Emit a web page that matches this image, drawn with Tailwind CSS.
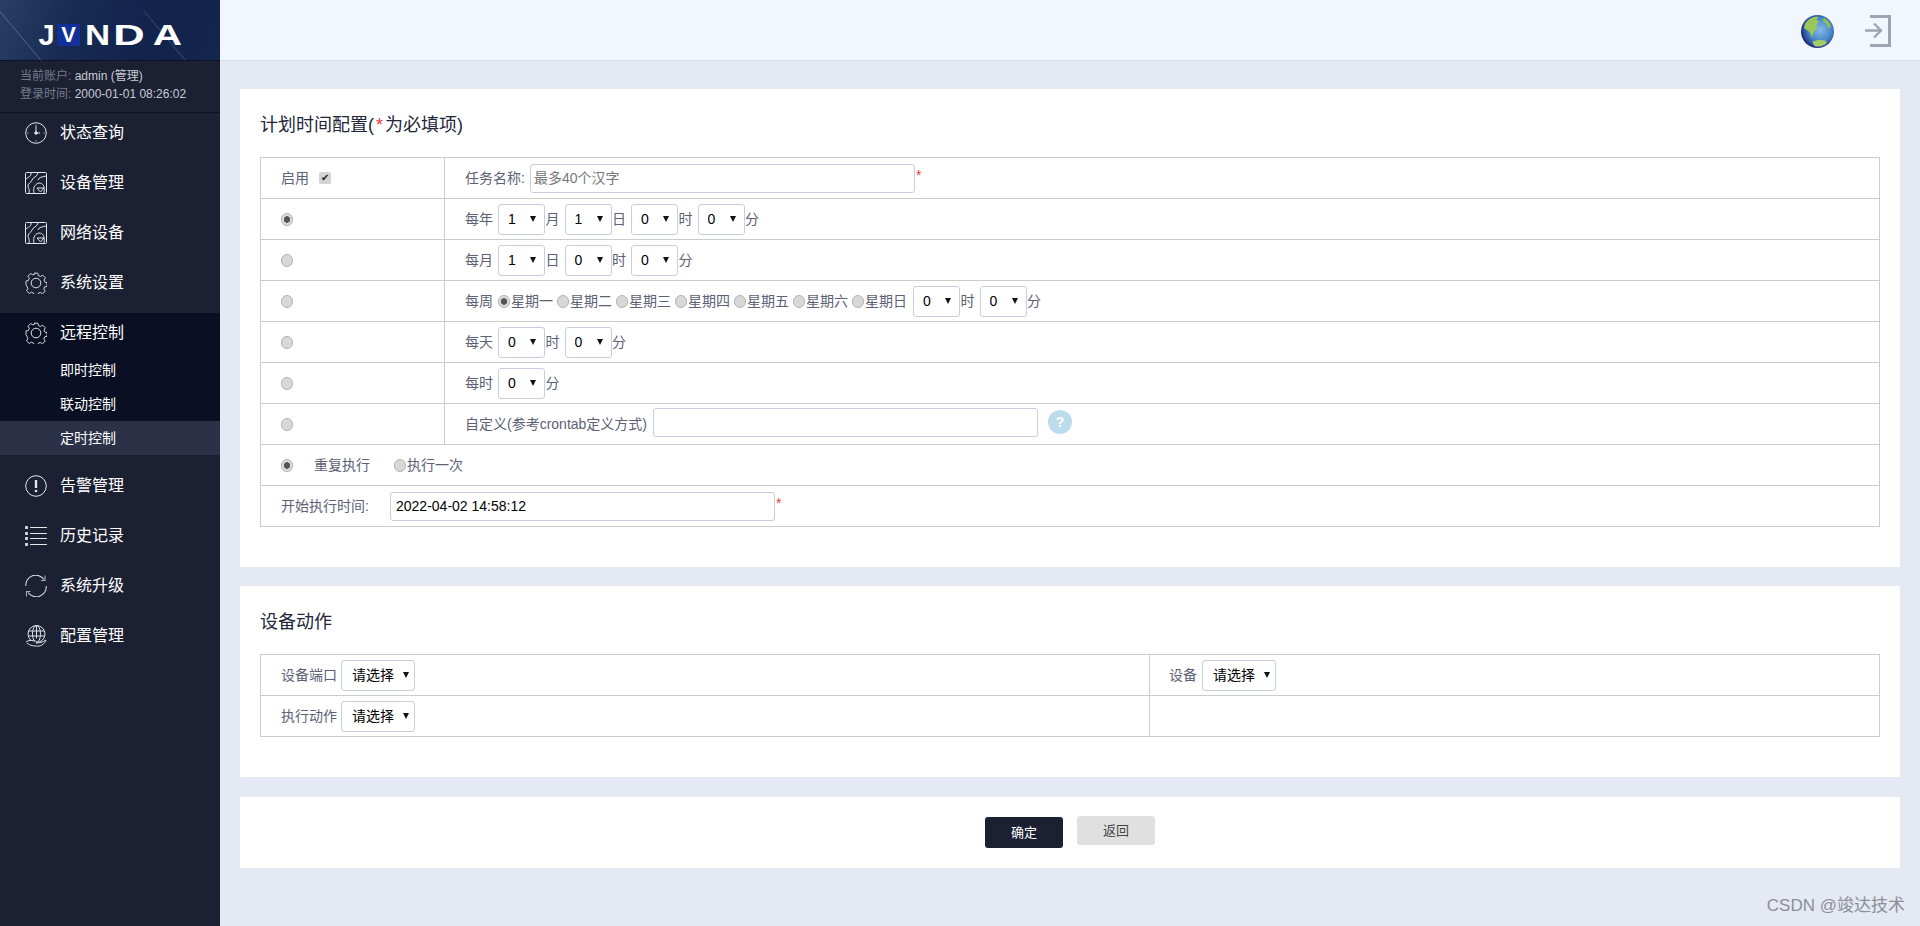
<!DOCTYPE html>
<html lang="zh-CN">
<head>
<meta charset="UTF-8">
<title>计划时间配置</title>
<script src="https://cdn.jsdelivr.net/npm/@tailwindcss/browser@4"></script>
</head>
<body class="bg-[#e4e9f4] font-['Liberation_Sans','Noto_Sans_CJK_SC',sans-serif] text-[14px] text-[#5c6175]">
<div class="relative flex h-[926px] w-[1920px] overflow-hidden">

  <!-- sidebar -->
  <aside class="w-[220px] shrink-0 bg-[#1b2033] text-white">
    <div class="relative flex h-[60px] items-center justify-center overflow-hidden bg-[linear-gradient(110deg,#2a3f63_0%,#162a52_35%,#12234c_70%,#15264e_100%)]">
      <div class="absolute left-[15px] top-[-40px] h-[140px] w-px rotate-[-40deg] bg-white/20"></div>
      <div class="absolute left-[172px] top-[0px] h-[90px] w-px rotate-[-40deg] bg-white/15"></div>
      <div class="relative mt-[10px] flex items-center text-[29px] font-bold leading-[22px] text-white">
        <span class="flex w-[17px] justify-center">J</span>
        <span class="ml-[2px] mr-[5px] flex h-[22px] w-[23px] items-center justify-center bg-[#12309a] text-[22px]">V</span>
        <span class="mr-[3px] flex w-[25px] scale-x-[1.2] justify-center">N</span>
        <span class="mr-[8px] flex w-[32px] scale-x-[1.5] justify-center">D</span>
        <span class="flex w-[29px] scale-x-[1.4] justify-center">A</span>
      </div>
    </div>
    <div class="h-[53px] border-y border-[#0e1224] pl-[20px] pt-[6px] text-[12px] leading-[18px] text-[#c9ccd6]">
      <div><span class="text-[#777c8e]">当前账户:</span> admin (管理)</div>
      <div><span class="text-[#777c8e]">登录时间:</span> 2000-01-01 08:26:02</div>
    </div>

    <nav class="-mt-[5px] text-[16px]">
      <a class="flex h-[50px] items-center gap-[13px] pl-[25px]">
        <svg class="h-[22px] w-[22px]" viewBox="0 0 22 22" fill="none" stroke="#dfe1e8" stroke-width="1"><circle cx="11" cy="11" r="10.3"/><path d="M11 4v7h4M11 2.5v1M11 18.5v1M2.5 11h1M18.500 11h1"/><circle cx="11" cy="11" r="1.300" fill="#dfe1e8"/></svg>
        <span>状态查询</span>
      </a>
      <a class="flex h-[50px] items-center gap-[13px] pl-[25px]">
        <svg class="h-[22px] w-[22px]" viewBox="0 0 22 22" fill="none" stroke="#e4e6ec" stroke-width="1"><rect x="0.500" y="0.500" width="21" height="21" rx="1"/><path d="M6 1C7 4 3 5 1 7M13 1C12 5 8 5 7 8 6 11 3 11 3 14 3 16 5 17 4 21M21 4C17 5 14 5 13 8M9 21C8 17 9 12 14 11 18 11 20 14 19 21"/><path d="M12 16h7l-3.500 4z"/></svg>
        <span>设备管理</span>
      </a>
      <a class="flex h-[50px] items-center gap-[13px] pl-[25px]">
        <svg class="h-[22px] w-[22px]" viewBox="0 0 22 22" fill="none" stroke="#e4e6ec" stroke-width="1"><rect x="0.500" y="0.500" width="21" height="21" rx="1"/><path d="M6 1C7 4 3 5 1 7M13 1C12 5 8 5 7 8 6 11 3 11 3 14 3 16 5 17 4 21M21 4C17 5 14 5 13 8M9 21C8 17 9 12 14 11 18 11 20 14 19 21"/><path d="M12 16h7l-3.500 4z"/></svg>
        <span>网络设备</span>
      </a>
      <a class="flex h-[50px] items-center gap-[13px] pl-[25px]">
        <svg class="h-[22px] w-[22px]" viewBox="0 0 22 22" fill="none" stroke="#dfe1e8" stroke-width="1"><circle cx="11" cy="11" r="4.800"/><path d="M9 .7h4l.6 2.600 2.200.9 2.300-1.400 2.800 2.800-1.400 2.300.9 2.200 2.300.6v3.800l-2.600.7-.8 2.100 1.400 2.300-2.800 2.800-2.300-1.400-2.200.9-.6 2.300H9l-.6-2.600-2.200-.9-2.300 1.400-2.800-2.800 1.400-2.300-.9-2.200L.5 12.800V9l2.600-.7.9-2.100-1.400-2.300 2.800-2.800 2.300 1.400 2.200-.9z" transform="translate(.5 .5) scale(.95)"/></svg>
        <span>系统设置</span>
      </a>

      <div class="mb-[6px] mt-[5px] bg-[#0a0f24]">
        <a class="flex h-[40px] items-center gap-[13px] pl-[25px]">
          <svg class="h-[22px] w-[22px]" viewBox="0 0 22 22" fill="none" stroke="#dfe1e8" stroke-width="1"><circle cx="11" cy="11" r="4.800"/><path d="M9 .7h4l.6 2.600 2.200.9 2.300-1.400 2.800 2.800-1.400 2.300.9 2.200 2.300.6v3.800l-2.600.7-.8 2.100 1.400 2.300-2.800 2.800-2.300-1.400-2.200.9-.6 2.300H9l-.6-2.600-2.200-.9-2.300 1.400-2.800-2.800 1.400-2.300-.9-2.200L.5 12.800V9l2.600-.7.9-2.100-1.400-2.300 2.800-2.800 2.300 1.400 2.200-.9z" transform="translate(.5 .5) scale(.95)"/></svg>
          <span>远程控制</span>
        </a>
        <a class="flex h-[34px] items-center pl-[60px] text-[14px]">即时控制</a>
        <a class="flex h-[34px] items-center pl-[60px] text-[14px]">联动控制</a>
        <a class="flex h-[34px] items-center bg-[#2c3148] pl-[60px] text-[14px]">定时控制</a>
      </div>

      <a class="flex h-[50px] items-center gap-[13px] pl-[25px]">
        <svg class="h-[22px] w-[22px]" viewBox="0 0 22 22" fill="none" stroke="#e4e6ec" stroke-width="1"><circle cx="11" cy="11" r="10.300"/><path d="M11 5v8" stroke-width="2.400"/><circle cx="11" cy="16" r="1.300" fill="#e4e6ec" stroke="none"/></svg>
        <span>告警管理</span>
      </a>
      <a class="flex h-[50px] items-center gap-[13px] pl-[25px]">
        <svg class="h-[22px] w-[22px]" viewBox="0 0 22 22" fill="none" stroke="#e4e6ec" stroke-width="1"><path d="M5 2.500h17M5 8.500h17M5 13.500h17M5 19.500h17"/><path d="M1.500 1v3M1.500 7v3M1.500 12v3M1.500 18v3" stroke-width="2.600"/></svg>
        <span>历史记录</span>
      </a>
      <a class="flex h-[50px] items-center gap-[13px] pl-[25px]">
        <svg class="h-[22px] w-[22px]" viewBox="0 0 22 22" fill="none" stroke="#d5d7df" stroke-width="1.100"><path d="M.8 11A10 10 0 0 1 19 4.500M21.200 11A10 10 0 0 1 3 17.500"/><path d="M20 .5v5h-4M1.500 21.500v-5h4" stroke="#a9acb8"/></svg>
        <span>系统升级</span>
      </a>
      <a class="flex h-[50px] items-center gap-[13px] pl-[25px]">
        <svg class="h-[22px] w-[22px]" viewBox="0 0 22 22" fill="none" stroke="#dfe1e8" stroke-width="1"><circle cx="11.500" cy="9" r="8.500"/><ellipse cx="11.500" cy="9" rx="4" ry="8.500"/><path d="M11.500 .5v13M3.500 6h16M3.500 11h16"/><path d="M1 17c3-2 5-2 8-1 3 0 4 1 2 2M11 18c4 0 7-1 10-3-1 4-6 7-10 6-4 0-7-1-9-3" fill="#1b2033"/></svg>
        <span>配置管理</span>
      </a>
    </nav>
  </aside>

  <!-- main -->
  <div class="flex min-w-0 flex-1 flex-col">
    <header class="flex h-[61px] shrink-0 items-center justify-end border-b border-[#d8dde8] bg-[#f2f6fe] pr-[29px]">
      <svg class="mr-[31px] mt-[3px] h-[33px] w-[33px]" viewBox="0 0 32 32">
        <defs>
          <radialGradient id="sea" cx="58%" cy="45%" r="58%"><stop offset="0" stop-color="#86bbe8"/><stop offset="0.600" stop-color="#4787c6"/><stop offset="0.880" stop-color="#2a4a9a"/><stop offset="1" stop-color="#1c2470"/></radialGradient>
        </defs>
        <circle cx="16" cy="16" r="16" fill="url(#sea)"/>
        <path d="M8 4c3-2 6-3 9-2l-2 3 3 1-3 3 1 3-4 5-1 5-3-6-5-3C3 9 5 6 8 4z" fill="#9ac65c"/>
        <path d="M22 3c3 1 6 4 7 8l-2 2-3-5-3-2z" fill="#8fbf55"/>
        <path d="M11 26c4-2 9-2 13-1l1 2c-4 4-8 4-12 3z" fill="#a3cc64"/>
      </svg>
      <svg class="mt-[2px] h-[32px] w-[26px]" viewBox="0 0 26 32" fill="none" stroke="#9ea4b4">
        <path d="M5 1.500h19.500v29H5" stroke-width="3"/>
        <path d="M0 15.500h15M9 8.500l7 7-7 7" stroke-width="2.400"/>
      </svg>
    </header>

    <main class="px-5 pt-[28px]">
      <section class="mb-[19px] h-[478px] bg-white px-5 pt-5">
        <h2 class="mb-4 flex h-8 items-center text-[18px] font-normal text-[#22263a]">计划时间配置(<span class="mx-[2px] text-[#e53935]">*</span>为必填项)</h2>
        <table class="w-full table-fixed border-collapse border border-[#cccccc]">
          <colgroup><col class="w-[184px]"><col></colgroup>
          <tr class="h-[41px] border-b border-[#cccccc]">
            <td class="border-r border-[#cccccc] pl-[20px]">
              <div class="flex items-center">
                <span>启用</span>
                <span class="ml-[10px] flex h-[12px] w-[12px] items-center justify-center rounded-[2px] bg-[#d4d4d4] text-[10px] leading-none text-[#222]">✔</span>
              </div>
            </td>
            <td class="pl-[20px]">
              <div class="flex items-center">
                <span class="mr-[5px]">任务名称:</span>
                <input class="h-[29px] w-[385px] rounded-[3px] border border-[#c5cfe0] px-[3px] text-[14px] placeholder:text-[#777]" placeholder="最多40个汉字">
                <span class="mb-[6px] ml-px text-[#e53935]">*</span>
              </div>
            </td>
          </tr>
          <tr class="h-[41px] border-b border-[#cccccc]">
            <td class="border-r border-[#cccccc] pl-[20px]"><input type="radio" name="plan" checked class="block h-[13px] w-[12px] appearance-none rounded-full border border-[#b4b4b4] bg-[#d8d8d8] checked:bg-[radial-gradient(circle,#555_0_3px,#dcdcdc_3.5px)]"></td>
            <td class="pl-[20px]">
              <div class="flex items-center">
                <span class="mr-[5px]">每年</span>
                <div class="relative mr-[0.5px]"><select class="h-[31px] w-[47px] appearance-none rounded-[3px] border border-[#c5cfe0] pl-[9px] text-[14px] text-black"><option>1</option></select><svg class="absolute right-[9px] top-[12px] h-[6px] w-[6px]" viewBox="0 0 6 6"><path d="M0 0h6L3 6z" fill="#111"/></svg></div>
                <span class="mr-[5px]">月</span>
                <div class="relative mr-[0.5px]"><select class="h-[31px] w-[47px] appearance-none rounded-[3px] border border-[#c5cfe0] pl-[9px] text-[14px] text-black"><option>1</option></select><svg class="absolute right-[9px] top-[12px] h-[6px] w-[6px]" viewBox="0 0 6 6"><path d="M0 0h6L3 6z" fill="#111"/></svg></div>
                <span class="mr-[5px]">日</span>
                <div class="relative mr-[0.5px]"><select class="h-[31px] w-[47px] appearance-none rounded-[3px] border border-[#c5cfe0] pl-[9px] text-[14px] text-black"><option>0</option></select><svg class="absolute right-[9px] top-[12px] h-[6px] w-[6px]" viewBox="0 0 6 6"><path d="M0 0h6L3 6z" fill="#111"/></svg></div>
                <span class="mr-[5px]">时</span>
                <div class="relative mr-[0.5px]"><select class="h-[31px] w-[47px] appearance-none rounded-[3px] border border-[#c5cfe0] pl-[9px] text-[14px] text-black"><option>0</option></select><svg class="absolute right-[9px] top-[12px] h-[6px] w-[6px]" viewBox="0 0 6 6"><path d="M0 0h6L3 6z" fill="#111"/></svg></div>
                <span>分</span>
              </div>
            </td>
          </tr>
          <tr class="h-[41px] border-b border-[#cccccc]">
            <td class="border-r border-[#cccccc] pl-[20px]"><input type="radio" name="plan" class="block h-[13px] w-[12px] appearance-none rounded-full border border-[#b4b4b4] bg-[#d8d8d8] checked:bg-[radial-gradient(circle,#555_0_3px,#dcdcdc_3.5px)]"></td>
            <td class="pl-[20px]">
              <div class="flex items-center">
                <span class="mr-[5px]">每月</span>
                <div class="relative mr-[0.5px]"><select class="h-[31px] w-[47px] appearance-none rounded-[3px] border border-[#c5cfe0] pl-[9px] text-[14px] text-black"><option>1</option></select><svg class="absolute right-[9px] top-[12px] h-[6px] w-[6px]" viewBox="0 0 6 6"><path d="M0 0h6L3 6z" fill="#111"/></svg></div>
                <span class="mr-[5px]">日</span>
                <div class="relative mr-[0.5px]"><select class="h-[31px] w-[47px] appearance-none rounded-[3px] border border-[#c5cfe0] pl-[9px] text-[14px] text-black"><option>0</option></select><svg class="absolute right-[9px] top-[12px] h-[6px] w-[6px]" viewBox="0 0 6 6"><path d="M0 0h6L3 6z" fill="#111"/></svg></div>
                <span class="mr-[5px]">时</span>
                <div class="relative mr-[0.5px]"><select class="h-[31px] w-[47px] appearance-none rounded-[3px] border border-[#c5cfe0] pl-[9px] text-[14px] text-black"><option>0</option></select><svg class="absolute right-[9px] top-[12px] h-[6px] w-[6px]" viewBox="0 0 6 6"><path d="M0 0h6L3 6z" fill="#111"/></svg></div>
                <span>分</span>
              </div>
            </td>
          </tr>
          <tr class="h-[41px] border-b border-[#cccccc]">
            <td class="border-r border-[#cccccc] pl-[20px]"><input type="radio" name="plan" class="block h-[13px] w-[12px] appearance-none rounded-full border border-[#b4b4b4] bg-[#d8d8d8] checked:bg-[radial-gradient(circle,#555_0_3px,#dcdcdc_3.5px)]"></td>
            <td class="pl-[20px]">
              <div class="flex items-center">
                <span class="mr-[5px]">每周</span>
                <input type="radio" name="week" checked class="block h-[13px] w-[12px] appearance-none rounded-full border border-[#b4b4b4] bg-[#d8d8d8] checked:bg-[radial-gradient(circle,#555_0_3px,#dcdcdc_3.5px)]"><span class="ml-px mr-[4px]">星期一</span>
                <input type="radio" name="week" class="block h-[13px] w-[12px] appearance-none rounded-full border border-[#b4b4b4] bg-[#d8d8d8]"><span class="ml-px mr-[4px]">星期二</span>
                <input type="radio" name="week" class="block h-[13px] w-[12px] appearance-none rounded-full border border-[#b4b4b4] bg-[#d8d8d8]"><span class="ml-px mr-[4px]">星期三</span>
                <input type="radio" name="week" class="block h-[13px] w-[12px] appearance-none rounded-full border border-[#b4b4b4] bg-[#d8d8d8]"><span class="ml-px mr-[4px]">星期四</span>
                <input type="radio" name="week" class="block h-[13px] w-[12px] appearance-none rounded-full border border-[#b4b4b4] bg-[#d8d8d8]"><span class="ml-px mr-[4px]">星期五</span>
                <input type="radio" name="week" class="block h-[13px] w-[12px] appearance-none rounded-full border border-[#b4b4b4] bg-[#d8d8d8]"><span class="ml-px mr-[4px]">星期六</span>
                <input type="radio" name="week" class="block h-[13px] w-[12px] appearance-none rounded-full border border-[#b4b4b4] bg-[#d8d8d8]"><span class="ml-px mr-[6px]">星期日</span>
                <div class="relative mr-[0.5px]"><select class="h-[31px] w-[47px] appearance-none rounded-[3px] border border-[#c5cfe0] pl-[9px] text-[14px] text-black"><option>0</option></select><svg class="absolute right-[9px] top-[12px] h-[6px] w-[6px]" viewBox="0 0 6 6"><path d="M0 0h6L3 6z" fill="#111"/></svg></div>
                <span class="mr-[5px]">时</span>
                <div class="relative mr-[0.5px]"><select class="h-[31px] w-[47px] appearance-none rounded-[3px] border border-[#c5cfe0] pl-[9px] text-[14px] text-black"><option>0</option></select><svg class="absolute right-[9px] top-[12px] h-[6px] w-[6px]" viewBox="0 0 6 6"><path d="M0 0h6L3 6z" fill="#111"/></svg></div>
                <span>分</span>
              </div>
            </td>
          </tr>
          <tr class="h-[41px] border-b border-[#cccccc]">
            <td class="border-r border-[#cccccc] pl-[20px]"><input type="radio" name="plan" class="block h-[13px] w-[12px] appearance-none rounded-full border border-[#b4b4b4] bg-[#d8d8d8] checked:bg-[radial-gradient(circle,#555_0_3px,#dcdcdc_3.5px)]"></td>
            <td class="pl-[20px]">
              <div class="flex items-center">
                <span class="mr-[5px]">每天</span>
                <div class="relative mr-[0.5px]"><select class="h-[31px] w-[47px] appearance-none rounded-[3px] border border-[#c5cfe0] pl-[9px] text-[14px] text-black"><option>0</option></select><svg class="absolute right-[9px] top-[12px] h-[6px] w-[6px]" viewBox="0 0 6 6"><path d="M0 0h6L3 6z" fill="#111"/></svg></div>
                <span class="mr-[5px]">时</span>
                <div class="relative mr-[0.5px]"><select class="h-[31px] w-[47px] appearance-none rounded-[3px] border border-[#c5cfe0] pl-[9px] text-[14px] text-black"><option>0</option></select><svg class="absolute right-[9px] top-[12px] h-[6px] w-[6px]" viewBox="0 0 6 6"><path d="M0 0h6L3 6z" fill="#111"/></svg></div>
                <span>分</span>
              </div>
            </td>
          </tr>
          <tr class="h-[41px] border-b border-[#cccccc]">
            <td class="border-r border-[#cccccc] pl-[20px]"><input type="radio" name="plan" class="block h-[13px] w-[12px] appearance-none rounded-full border border-[#b4b4b4] bg-[#d8d8d8] checked:bg-[radial-gradient(circle,#555_0_3px,#dcdcdc_3.5px)]"></td>
            <td class="pl-[20px]">
              <div class="flex items-center">
                <span class="mr-[5px]">每时</span>
                <div class="relative mr-[0.5px]"><select class="h-[31px] w-[47px] appearance-none rounded-[3px] border border-[#c5cfe0] pl-[9px] text-[14px] text-black"><option>0</option></select><svg class="absolute right-[9px] top-[12px] h-[6px] w-[6px]" viewBox="0 0 6 6"><path d="M0 0h6L3 6z" fill="#111"/></svg></div>
                <span>分</span>
              </div>
            </td>
          </tr>
          <tr class="h-[41px] border-b border-[#cccccc]">
            <td class="border-r border-[#cccccc] pl-[20px]"><input type="radio" name="plan" class="block h-[13px] w-[12px] appearance-none rounded-full border border-[#b4b4b4] bg-[#d8d8d8] checked:bg-[radial-gradient(circle,#555_0_3px,#dcdcdc_3.5px)]"></td>
            <td class="pl-[20px]">
              <div class="flex items-center">
                <span class="mr-[6px]">自定义(参考crontab定义方式)</span>
                <input class="mb-[3px] h-[29px] w-[385px] rounded-[3px] border border-[#c5cfe0] px-[3px]">
                <span class="mb-[4px] ml-[10px] flex h-[24px] w-[24px] items-center justify-center rounded-full bg-[#bcdcec] text-[14px] font-bold text-white">?</span>
              </div>
            </td>
          </tr>
          <tr class="h-[41px] border-b border-[#cccccc]">
            <td colspan="2" class="pl-[20px]">
              <div class="flex items-center">
                <input type="radio" name="repeat" checked class="block h-[13px] w-[12px] appearance-none rounded-full border border-[#b4b4b4] bg-[#d8d8d8] checked:bg-[radial-gradient(circle,#555_0_3px,#dcdcdc_3.5px)]">
                <span class="ml-[21px]">重复执行</span>
                <input type="radio" name="repeat" class="ml-[24px] block h-[13px] w-[12px] appearance-none rounded-full border border-[#b4b4b4] bg-[#d8d8d8]">
                <span class="ml-px">执行一次</span>
              </div>
            </td>
          </tr>
          <tr class="h-[41px]">
            <td colspan="2" class="pl-[20px]">
              <div class="flex items-center">
                <span class="w-[109px]">开始执行时间:</span>
                <input class="h-[29px] w-[385px] rounded-[3px] border border-[#c5cfe0] pl-[5px] text-[14px] text-black" value="2022-04-02 14:58:12">
                <span class="mb-[6px] ml-px text-[#e53935]">*</span>
              </div>
            </td>
          </tr>
        </table>
      </section>

      <section class="mb-5 h-[191px] bg-white px-5 pt-5">
        <h2 class="mb-4 flex h-8 items-center text-[18px] font-normal text-[#22263a]">设备动作</h2>
        <table class="w-full table-fixed border-collapse border border-[#cccccc]">
          <colgroup><col class="w-[889px]"><col></colgroup>
          <tr class="h-[41px] border-b border-[#cccccc]">
            <td class="border-r border-[#cccccc] pl-[20px]">
              <div class="flex items-center">
                <span class="mr-[4px]">设备端口</span>
                <div class="relative"><select class="h-[31px] w-[74px] appearance-none rounded-[3px] border border-[#c5cfe0] pl-[10px] text-[14px] text-black"><option>请选择</option></select><svg class="absolute right-[6px] top-[12px] h-[6px] w-[6px]" viewBox="0 0 6 6"><path d="M0 0h6L3 6z" fill="#111"/></svg></div>
              </div>
            </td>
            <td class="pl-[19px]">
              <div class="flex items-center">
                <span class="mr-[5px]">设备</span>
                <div class="relative"><select class="h-[31px] w-[74px] appearance-none rounded-[3px] border border-[#c5cfe0] pl-[10px] text-[14px] text-black"><option>请选择</option></select><svg class="absolute right-[6px] top-[12px] h-[6px] w-[6px]" viewBox="0 0 6 6"><path d="M0 0h6L3 6z" fill="#111"/></svg></div>
              </div>
            </td>
          </tr>
          <tr class="h-[41px]">
            <td class="border-r border-[#cccccc] pl-[20px]">
              <div class="flex items-center">
                <span class="mr-[4px]">执行动作</span>
                <div class="relative"><select class="h-[31px] w-[74px] appearance-none rounded-[3px] border border-[#c5cfe0] pl-[10px] text-[14px] text-black"><option>请选择</option></select><svg class="absolute right-[6px] top-[12px] h-[6px] w-[6px]" viewBox="0 0 6 6"><path d="M0 0h6L3 6z" fill="#111"/></svg></div>
              </div>
            </td>
            <td></td>
          </tr>
        </table>
      </section>

      <section class="flex h-[71px] items-start justify-center gap-[14px] bg-white pt-[19px]">
        <button class="mt-px h-[31px] w-[78px] rounded-[3px] bg-[#1b2033] text-[13px] text-white">确定</button>
        <button class="h-[29px] w-[78px] rounded-[3px] bg-[#e0e0e0] text-[13px] text-[#444]">返回</button>
      </section>
    </main>
  </div>

  <div class="absolute bottom-[9px] right-[15px] text-[17px] leading-[22px] text-[#8d8f96]">CSDN @竣达技术</div>
</div>
</body>
</html>
